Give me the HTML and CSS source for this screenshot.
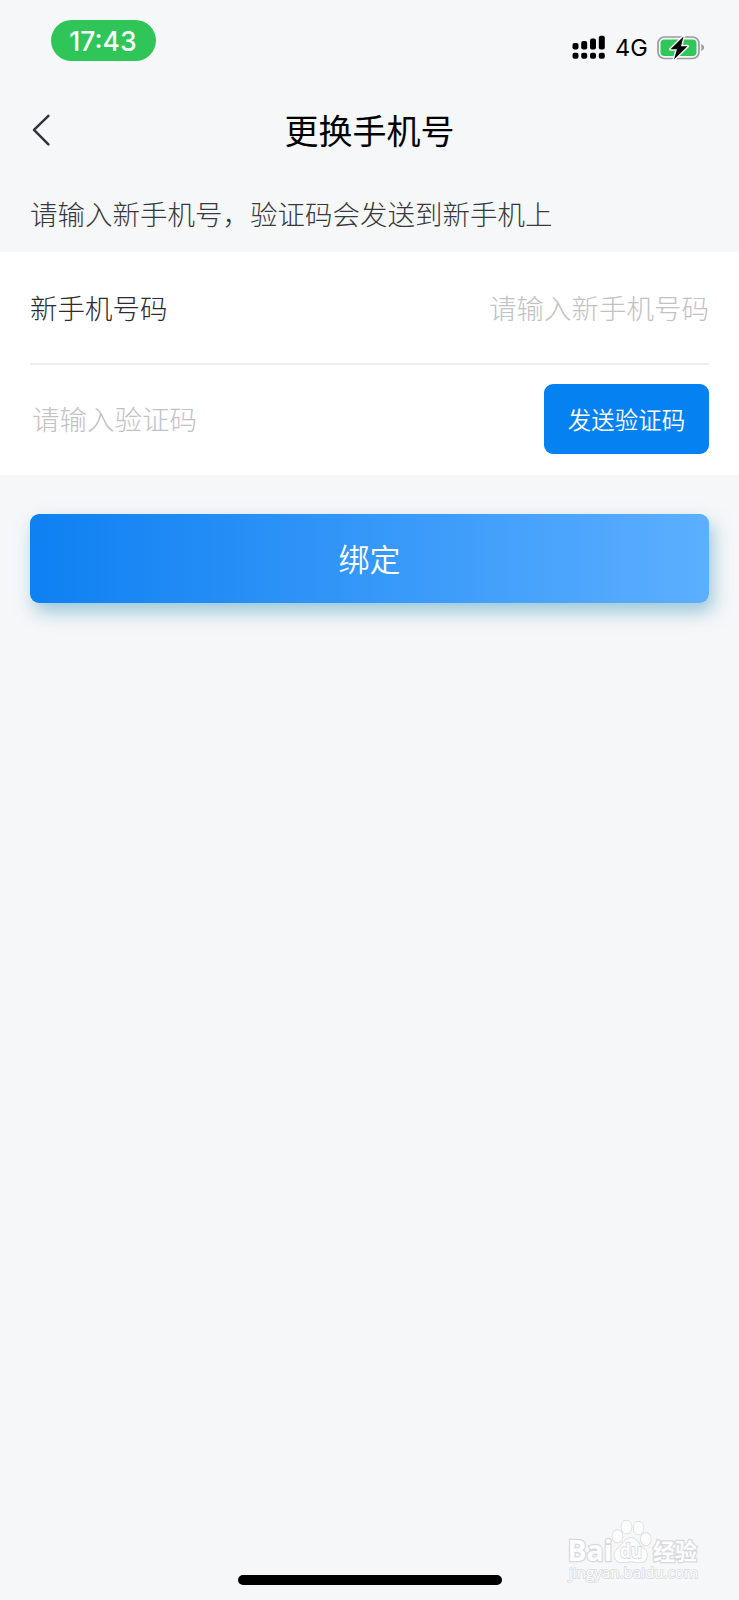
FILE: index.html
```
<!DOCTYPE html>
<html lang="zh-CN">
<head>
<meta charset="utf-8">
<title>更换手机号</title>
<link rel="stylesheet" href="styles.css">
</head>
<body>
<div class="screen">
  <div class="status">
    <span class="time">17:43</span>
    <div class="status-right">
      <svg class="signal" width="34" height="26" viewBox="0 0 34 26">
        <rect x="0.5" y="8" width="6" height="6.5" rx="2"/><rect x="9.2" y="6" width="6" height="8.5" rx="2"/><rect x="18" y="3.5" width="6" height="11" rx="2"/><rect x="26.8" y="0.8" width="6" height="13.7" rx="2"/>
        <rect x="0.5" y="17.8" width="6" height="6" rx="2"/><rect x="9.2" y="17.8" width="6" height="6" rx="2"/><rect x="18" y="17.8" width="6" height="6" rx="2"/><rect x="26.8" y="17.8" width="6" height="6" rx="2"/>
      </svg>
      <span class="network">4G</span>
      <svg class="battery" width="48" height="26" viewBox="0 0 48 26">
        <rect x="1" y="2" width="41" height="21.5" rx="6.5" fill="none" stroke="#9b9c9e" stroke-width="1.7"/>
        <path d="M44.3 9c3.7 1.5 3.7 5.5 0 7z" fill="#9b9c9e"/>
        <rect x="3.5" y="4.5" width="36" height="16.5" rx="4" fill="#30c759"/>
        <path d="M26.5 1.5 13.5 14.2h6.5L17 24.5 30.5 11.2h-6.5z" fill="#000" stroke="#f6f7f9" stroke-width="3" paint-order="stroke" stroke-linejoin="round"/>
      </svg>
    </div>
  </div>
  <header class="header">
    <svg class="back" width="20" height="34" viewBox="0 0 20 34"><path d="M17.4 2.8 3 16.8 17.4 31.3" fill="none" stroke="#333438" stroke-width="2.5" stroke-linecap="round" stroke-linejoin="round"/></svg>
    <h1 class="title">更换手机号</h1>
  </header>
  <p class="hint">请输入新手机号，验证码会发送到新手机上</p>
  <div class="form">
    <div class="row row-phone">
      <span class="label">新手机号码</span>
      <span class="placeholder">请输入新手机号码</span>
    </div>
    <div class="row row-code">
      <span class="placeholder code">请输入验证码</span>
      <button class="send">发送验证码</button>
    </div>
  </div>
  <button class="bind">绑定</button>
  <svg class="watermark" width="150" height="72" viewBox="0 0 150 72">
    <g class="mark">
      <ellipse cx="51.5" cy="21.3" rx="5" ry="6.3"/>
      <ellipse cx="60.5" cy="12" rx="5" ry="6.6"/>
      <ellipse cx="72.5" cy="13" rx="5" ry="6.6"/>
      <ellipse cx="79.8" cy="24.2" rx="5" ry="6.2"/>
      <path d="M65 23c-5 0-7 4-9.500 7-3 3.500-7 5-7 10 0 5 3.500 7.500 8 7.300 3 0 5-.8 8.500-.8s5.500.8 8.500.8c4.500.2 7.500-2.300 7.500-7.300 0-5-4-6.500-7-10C71.500 27 70 23 65 23z"/>
      <text class="bai" x="1.5" y="46" textLength="45" lengthAdjust="spacingAndGlyphs">Bai</text>
      <text class="du" x="54" y="43" textLength="22" lengthAdjust="spacingAndGlyphs">du</text>
      <text class="jing" x="87" y="45" textLength="44" lengthAdjust="spacingAndGlyphs">经验</text>
      <text class="url" x="3" y="63" textLength="129" lengthAdjust="spacingAndGlyphs">jingyan.baidu.com</text>
    </g>
  </svg>
  <div class="home"></div>
</div>
</body>
</html>
```
FILE: styles.css
```
* { box-sizing: border-box; }
body { margin: 0; }
.screen {
  position: relative;
  display: flex;
  flex-direction: column;
  width: 739px;
  height: 1600px;
  overflow: hidden;
  background: #f6f7f9;
  font-family: "Noto Sans CJK SC", sans-serif;
  font-weight: 300;
}
.status {
  display: flex;
  justify-content: space-between;
  height: 82px;
  padding: 20px 34px 0 51px;
}
.time {
  width: 105px;
  height: 41px;
  padding-right: 1px;
  border-radius: 21px;
  background: #30c558;
  color: #fff;
  font: 500 26.5px/42px Inter, sans-serif;
  text-align: center;
}
.status-right { display: flex; align-items: center; height: 55px; }
.network { margin: 1px 0 0 9px; width: 42px; font: 400 23.5px/30px Inter, sans-serif; }
.header {
  display: grid;
  grid-template-columns: 60px 1fr 60px;
  align-items: center;
  height: 96px;
  padding: 0 30px;
}
.back { margin-left: 1px; }
.title {
  margin: 0;
  color: #000;
  font-size: 34px;
  font-weight: 400;
  line-height: 50px;
  text-align: center;
}
.hint { margin: 0; height: 74px; padding-left: 30px; color: #38393b; font-size: 27.5px; line-height: 70px; }
.form { height: 223px; padding: 0 30px; background: #fff; }
.row { display: flex; align-items: center; justify-content: space-between; height: 113px; font-size: 27.5px; }
.row-phone { padding-bottom: 1px; border-bottom: 2px solid #eeeeef; }
.row-code { height: 110px; padding-bottom: 2px; }
.label { color: #2b2b2b; }
.placeholder { color: #c2c2c2; }
.code { padding: 0 0 3px 2px; }
button { border: 0; padding: 0; color: #fff; font-family: inherit; font-weight: 350; }
.send { width: 165px; height: 70px; padding-bottom: 1px; border-radius: 9px; background: #0581f2; font-size: 23.5px; }
.bind {
  width: 679px;
  height: 89px;
  margin: 39px 30px 0;
  padding-bottom: 2px;
  border-radius: 9px;
  background: linear-gradient(90deg, #0e80f2, #5cafff);
  box-shadow: 4px 9px 18px rgba(66, 153, 190, .5);
  font-size: 31px;
}
.watermark { position: absolute; left: 566px; top: 1515px; }
.mark { fill: #fdfdfe; stroke: #d8d9dc; stroke-width: 1.5px; paint-order: stroke; }
.bai { font: 700 29px "Open Sans", sans-serif; stroke-width: 2.5px; }
.du { font: 700 20px "Open Sans", sans-serif; fill: #fdfdfe; stroke: #d0d1d4; }
.jing { font: 700 23px "Noto Sans CJK SC", sans-serif; stroke-width: 2.5px; }
.url { font: 400 15px "Open Sans", sans-serif; stroke-width: 1.5px; }
.home { width: 264px; height: 10px; margin: auto auto 15px; border-radius: 5px; background: #000; }
```
